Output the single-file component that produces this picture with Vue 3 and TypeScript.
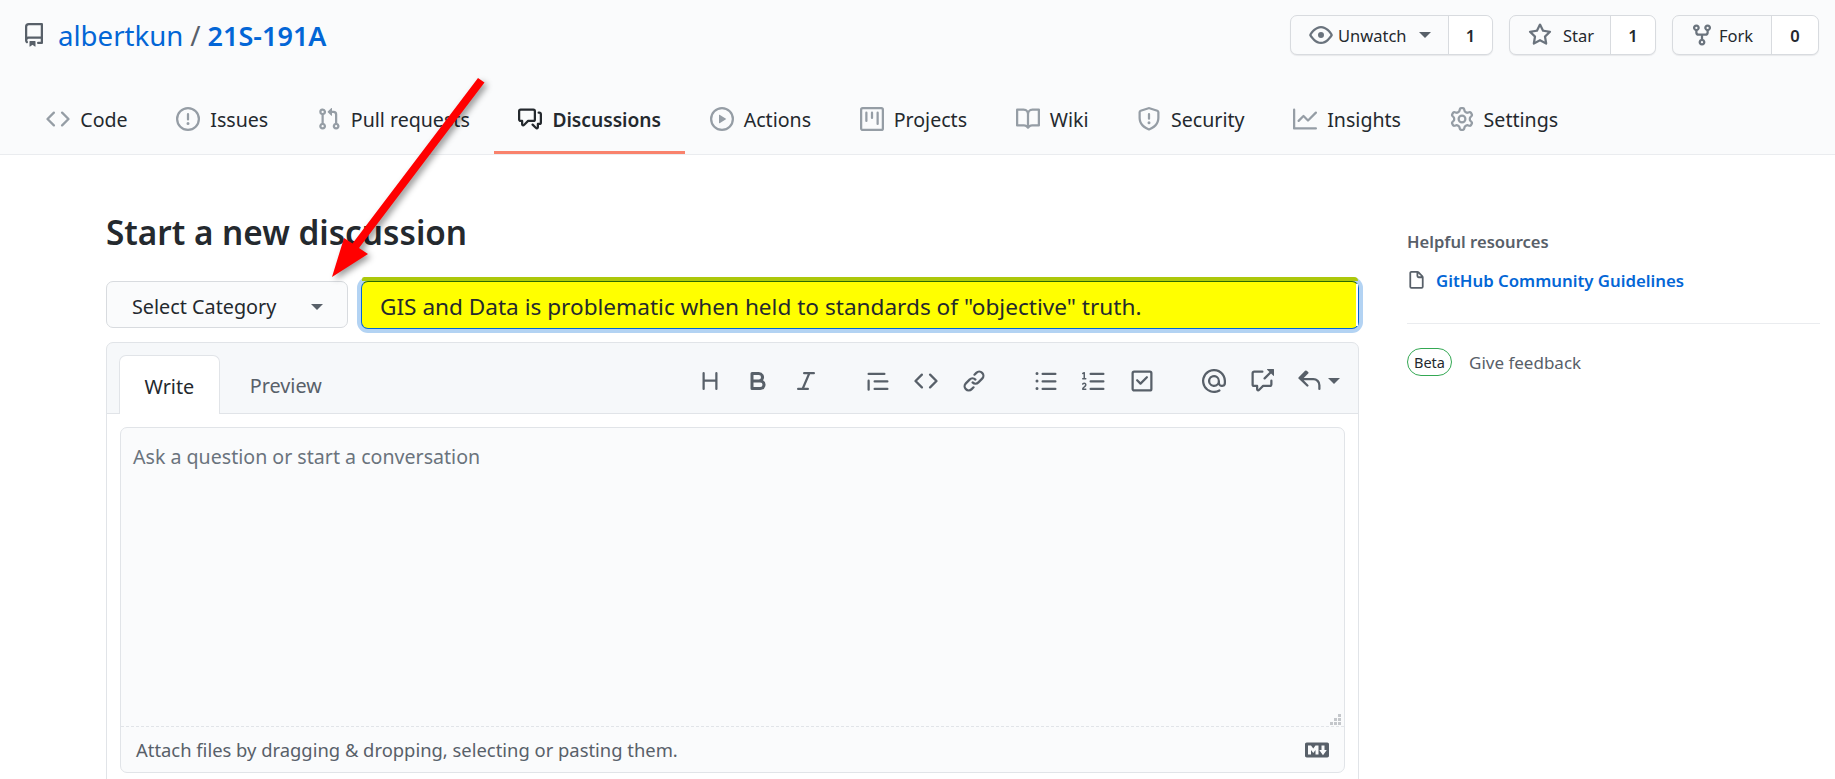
<script setup lang="ts">
const P: Record<string, string> = {
  repo: 'M2 2.5A2.5 2.5 0 014.5 0h8.75a.75.75 0 01.75.75v12.5a.75.75 0 01-.75.75h-2.5a.75.75 0 110-1.5h1.75v-2h-8a1 1 0 00-.714 1.7.75.75 0 01-1.072 1.05A2.495 2.495 0 012 11.5v-9zm10.5-1V9h-8c-.356 0-.694.074-1 .208V2.5a1 1 0 011-1h8zM5 12.25v3.25a.25.25 0 00.4.2l1.45-1.087a.25.25 0 01.3 0L8.6 15.7a.25.25 0 00.4-.2v-3.25a.25.25 0 00-.25-.25h-3.5a.25.25 0 00-.25.25z',
  code: 'M4.72 3.22a.75.75 0 011.06 1.06L2.06 8l3.72 3.72a.75.75 0 11-1.06 1.06L.47 8.53a.75.75 0 010-1.06l4.25-4.25zm6.56 0a.75.75 0 10-1.06 1.06L13.94 8l-3.72 3.72a.75.75 0 101.06 1.06l4.25-4.25a.75.75 0 000-1.06l-4.25-4.25z',
  issue: 'M8 1.5a6.5 6.5 0 100 13 6.5 6.5 0 000-13zM0 8a8 8 0 1116 0A8 8 0 010 8zm9 3a1 1 0 11-2 0 1 1 0 012 0zm-.25-6.25a.75.75 0 00-1.5 0v3.5a.75.75 0 001.5 0v-3.5z',
  pr: 'M7.177 3.073L9.573.677A.25.25 0 0110 .854v4.792a.25.25 0 01-.427.177L7.177 3.427a.25.25 0 010-.354zM3.75 2.5a.75.75 0 100 1.5.75.75 0 000-1.5zm-2.25.75a2.25 2.25 0 113 2.122v5.256a2.251 2.251 0 11-1.5 0V5.372A2.25 2.25 0 011.5 3.25zM11 2.5h-1V4h1a1 1 0 011 1v5.628a2.251 2.251 0 101.5 0V5A2.5 2.5 0 0011 2.5zm1 10.25a.75.75 0 111.5 0 .75.75 0 01-1.5 0zM3.75 12a.75.75 0 100 1.5.75.75 0 000-1.5z',
  discussion: 'M1.5 2.75a.25.25 0 01.25-.25h8.5a.25.25 0 01.25.25v5.5a.25.25 0 01-.25.25h-3.5a.75.75 0 00-.53.22L3.5 11.44V9.25a.75.75 0 00-.75-.75h-1a.25.25 0 01-.25-.25v-5.5zM1.75 1A1.75 1.75 0 000 2.75v5.5C0 9.216.784 10 1.75 10H2v1.543a1.457 1.457 0 002.487 1.03L7.061 10h3.189A1.75 1.75 0 0012 8.25v-5.5A1.75 1.75 0 0010.25 1h-8.5zM14.5 4.75a.25.25 0 00-.25-.25h-.5a.75.75 0 110-1.5h.5c.966 0 1.75.784 1.75 1.75v5.5A1.75 1.75 0 0114.25 12H14v1.543a1.457 1.457 0 01-2.487 1.03L9.22 12.28a.75.75 0 111.06-1.06l2.22 2.22v-2.19a.75.75 0 01.75-.75h1a.25.25 0 00.25-.25v-5.5z',
  play: 'M1.5 8a6.5 6.5 0 1113 0 6.5 6.5 0 01-13 0zM8 0a8 8 0 100 16A8 8 0 008 0zM6.379 5.227A.25.25 0 006 5.442v5.117a.25.25 0 00.379.214l4.264-2.559a.25.25 0 000-.428L6.379 5.227z',
  project: 'M1.75 0A1.75 1.75 0 000 1.75v12.5C0 15.216.784 16 1.75 16h12.5A1.75 1.75 0 0016 14.25V1.75A1.75 1.75 0 0014.25 0H1.75zM1.5 1.75a.25.25 0 01.25-.25h12.5a.25.25 0 01.25.25v12.5a.25.25 0 01-.25.25H1.75a.25.25 0 01-.25-.25V1.75zM11.75 3a.75.75 0 00-.75.75v7.5a.75.75 0 001.5 0v-7.5a.75.75 0 00-.75-.75zm-8.25.75a.75.75 0 011.5 0v5.5a.75.75 0 01-1.5 0v-5.5zM8 3a.75.75 0 00-.75.75v3.5a.75.75 0 001.5 0v-3.5A.75.75 0 008 3z',
  book: 'M0 1.75A.75.75 0 01.75 1h4.253c1.227 0 2.317.59 3 1.501A3.744 3.744 0 0111.006 1h4.245a.75.75 0 01.75.75v10.5a.75.75 0 01-.75.75h-4.507a2.25 2.25 0 00-1.591.659l-.622.621a.75.75 0 01-1.06 0l-.622-.621A2.25 2.25 0 005.258 13H.75a.75.75 0 01-.75-.75V1.75zm8.755 3a2.25 2.25 0 012.25-2.25H14.5v9h-3.757c-.71 0-1.4.201-1.992.572l.004-7.322zm-1.504 7.324l.004-5.073-.002-2.253A2.25 2.25 0 005.003 2.5H1.5v9h3.757a3.75 3.75 0 011.994.574z',
  shield: 'M7.467.133a1.75 1.75 0 011.066 0l5.25 1.68A1.75 1.75 0 0115 3.48V7c0 1.566-.32 3.182-1.303 4.682-.983 1.498-2.585 2.813-5.032 3.855a1.7 1.7 0 01-1.33 0c-2.447-1.042-4.049-2.357-5.032-3.855C1.32 10.182 1 8.566 1 7V3.48a1.75 1.75 0 011.217-1.667l5.25-1.68zm.61 1.429a.25.25 0 00-.153 0l-5.25 1.68a.25.25 0 00-.174.238V7c0 1.358.275 2.666 1.057 3.86.784 1.194 2.121 2.34 4.366 3.297a.2.2 0 00.154 0c2.245-.956 3.582-2.104 4.366-3.298C13.225 9.666 13.5 8.36 13.5 7V3.48a.25.25 0 00-.174-.237l-5.25-1.68zM9 10.5a1 1 0 11-2 0 1 1 0 012 0zm-.25-5.75a.75.75 0 10-1.5 0v3a.75.75 0 001.5 0v-3z',
  graph: 'M1.5 1.75a.75.75 0 00-1.5 0v12.5c0 .414.336.75.75.75h14.5a.75.75 0 000-1.5H1.5V1.75zm14.28 2.53a.75.75 0 00-1.06-1.06L10 7.94 7.53 5.47a.75.75 0 00-1.06 0L3.22 8.72a.75.75 0 001.06 1.06L7 7.06l2.47 2.47a.75.75 0 001.06 0l5.25-5.25z',
  gear: 'M7.429 1.525a6.593 6.593 0 011.142 0c.036.003.108.036.137.146l.289 1.105c.147.56.55.967.997 1.189.174.086.341.183.501.29.417.278.97.423 1.53.27l1.102-.303c.11-.03.175.016.195.046.219.31.41.641.573.989.014.031.022.11-.059.19l-.815.806c-.411.406-.562.957-.53 1.456a4.588 4.588 0 010 .582c-.032.499.119 1.05.53 1.456l.815.806c.08.08.073.159.059.19a6.494 6.494 0 01-.573.99c-.02.029-.086.074-.195.045l-1.103-.303c-.559-.153-1.112-.008-1.529.27-.16.107-.327.204-.5.29-.449.222-.851.628-.998 1.189l-.289 1.105c-.029.11-.101.143-.137.146a6.613 6.613 0 01-1.142 0c-.036-.003-.108-.037-.137-.146l-.289-1.105c-.147-.56-.55-.967-.997-1.189a4.502 4.502 0 01-.501-.29c-.417-.278-.97-.423-1.53-.27l-1.102.303c-.11.03-.175-.016-.195-.046a6.492 6.492 0 01-.573-.989c-.014-.031-.022-.11.059-.19l.815-.806c.411-.406.562-.957.53-1.456a4.587 4.587 0 010-.582c.032-.499-.119-1.05-.53-1.456l-.815-.806c-.08-.08-.073-.159-.059-.19a6.44 6.44 0 01.573-.99c.02-.029.086-.075.195-.045l1.103.303c.559.153 1.112.008 1.529-.27.16-.107.327-.204.5-.29.449-.222.851-.628.998-1.189l.289-1.105c.029-.11.101-.143.137-.146zM8 0c-.236 0-.47.01-.701.03-.743.065-1.29.615-1.458 1.261l-.29 1.106c-.017.066-.078.158-.211.224a5.994 5.994 0 00-.668.386c-.123.082-.233.09-.3.071L3.27 2.776c-.644-.177-1.392.02-1.82.63a7.977 7.977 0 00-.704 1.217c-.315.675-.111 1.422.363 1.891l.815.806c.05.048.098.147.088.294a6.084 6.084 0 000 .772c.01.147-.038.246-.088.294l-.815.806c-.474.469-.678 1.216-.363 1.891.2.428.436.835.704 1.218.428.609 1.176.806 1.82.63l1.103-.303c.066-.019.176-.011.299.071.213.143.436.272.668.386.133.066.194.158.212.224l.289 1.106c.169.646.715 1.196 1.458 1.26a8.094 8.094 0 001.402 0c.743-.064 1.29-.614 1.458-1.26l.29-1.106c.017-.066.078-.158.211-.224a5.98 5.98 0 00.668-.386c.123-.082.233-.09.3-.071l1.102.302c.644.177 1.392-.02 1.82-.63.268-.382.505-.789.704-1.217.315-.675.111-1.422-.364-1.891l-.814-.806c-.05-.048-.098-.147-.088-.294a6.1 6.1 0 000-.772c-.01-.147.039-.246.088-.294l.814-.806c.475-.469.679-1.216.364-1.891a7.992 7.992 0 00-.704-1.218c-.428-.609-1.176-.806-1.82-.63l-1.103.303c-.066.019-.176.011-.299-.071a5.991 5.991 0 00-.668-.386c-.133-.066-.194-.158-.212-.224L10.16 1.29C9.99.645 9.444.095 8.701.031A8.094 8.094 0 008 0zm1.5 8a1.5 1.5 0 11-3 0 1.5 1.5 0 013 0zM11 8a3 3 0 11-6 0 3 3 0 016 0z',
  eye: 'M1.679 7.932c.412-.621 1.242-1.75 2.366-2.717C5.175 4.242 6.527 3.5 8 3.5c1.473 0 2.824.742 3.955 1.715 1.124.967 1.954 2.096 2.366 2.717a.119.119 0 010 .136c-.412.621-1.242 1.75-2.366 2.717C10.825 11.758 9.473 12.5 8 12.5c-1.473 0-2.824-.742-3.955-1.715C2.92 9.818 2.09 8.69 1.679 8.068a.119.119 0 010-.136zM8 2c-1.981 0-3.67.992-4.933 2.078C1.797 5.169.88 6.423.43 7.1a1.619 1.619 0 000 1.798c.45.678 1.367 1.932 2.637 3.024C4.329 13.008 6.019 14 8 14c1.981 0 3.67-.992 4.933-2.078 1.27-1.091 2.187-2.345 2.637-3.023a1.619 1.619 0 000-1.798c-.45-.678-1.367-1.932-2.637-3.023C11.671 2.992 9.981 2 8 2zm0 8a2 2 0 100-4 2 2 0 000 4z',
  star: 'M8 .25a.75.75 0 01.673.418l1.882 3.815 4.21.612a.75.75 0 01.416 1.279l-3.046 2.97.719 4.192a.75.75 0 01-1.088.791L8 12.347l-3.766 1.98a.75.75 0 01-1.088-.79l.72-4.194L.818 6.374a.75.75 0 01.416-1.28l4.21-.611L7.327.668A.75.75 0 018 .25zm0 2.445L6.615 5.5a.75.75 0 01-.564.41l-3.097.45 2.24 2.184a.75.75 0 01.216.664l-.528 3.084 2.769-1.456a.75.75 0 01.698 0l2.77 1.456-.53-3.084a.75.75 0 01.216-.664l2.24-2.183-3.096-.45a.75.75 0 01-.564-.41L8 2.694v.001z',
  fork: 'M5 3.25a.75.75 0 11-1.5 0 .75.75 0 011.5 0zm0 2.122a2.25 2.25 0 10-1.5 0v.878A2.25 2.25 0 005.75 8.5h1.5v2.128a2.251 2.251 0 101.5 0V8.5h1.5a2.25 2.25 0 002.25-2.25v-.878a2.25 2.25 0 10-1.5 0v.878a.75.75 0 01-.75.75h-4.5A.75.75 0 015 6.25v-.878zm3.75 7.378a.75.75 0 11-1.5 0 .75.75 0 011.5 0zm3-8.75a.75.75 0 100-1.5.75.75 0 000 1.5z',
  file: 'M3.75 1.5a.25.25 0 00-.25.25v11.5c0 .138.112.25.25.25h8.5a.25.25 0 00.25-.25V6H9.75A1.75 1.75 0 018 4.25V1.5H3.75zm5.75.56v2.19c0 .138.112.25.25.25h2.19L9.5 2.06zM2 1.75C2 .784 2.784 0 3.75 0h5.086c.464 0 .909.184 1.237.513l3.414 3.414c.329.328.513.773.513 1.237v8.086A1.75 1.75 0 0112.25 15h-8.5A1.75 1.75 0 012 13.25V1.75z',
  heading: 'M3.75 2a.75.75 0 01.75.75V7h7V2.75a.75.75 0 011.5 0v10.5a.75.75 0 01-1.5 0V8.5h-7v4.75a.75.75 0 01-1.5 0V2.75A.75.75 0 013.75 2z',
  bold: 'M4 2a1 1 0 00-1 1v10a1 1 0 001 1h5.5a3.5 3.5 0 001.852-6.47A3.5 3.5 0 008.5 2H4zm4.5 5a1.5 1.5 0 100-3H5v3h3.5zM5 9v3h4.5a1.5 1.5 0 000-3H5z',
  italic: 'M6 2.75A.75.75 0 016.75 2h6.5a.75.75 0 010 1.5h-2.505l-3.858 9H9.25a.75.75 0 010 1.5h-6.5a.75.75 0 010-1.5h2.505l3.858-9H6.75A.75.75 0 016 2.75z',
  quote: 'M1.75 2.5a.75.75 0 000 1.5h10.5a.75.75 0 000-1.5H1.75zm4 5a.75.75 0 000 1.5h8.5a.75.75 0 000-1.5h-8.5zm0 5a.75.75 0 000 1.5h8.5a.75.75 0 000-1.5h-8.5zM2.5 7.75a.75.75 0 00-1.5 0v6a.75.75 0 001.5 0v-6z',
  link: 'M7.775 3.275a.75.75 0 001.06 1.06l1.25-1.25a2 2 0 112.83 2.83l-2.5 2.5a2 2 0 01-2.83 0 .75.75 0 00-1.06 1.06 3.5 3.5 0 004.95 0l2.5-2.5a3.5 3.5 0 00-4.95-4.95l-1.25 1.25zm-4.69 9.64a2 2 0 010-2.83l2.5-2.5a2 2 0 012.83 0 .75.75 0 001.06-1.06 3.5 3.5 0 00-4.95 0l-2.5 2.5a3.5 3.5 0 004.95 4.95l1.25-1.25a.75.75 0 00-1.06-1.06l-1.25 1.25a2 2 0 01-2.83 0z',
  ul: 'M2 4a1 1 0 100-2 1 1 0 000 2zm3.75-1.5a.75.75 0 000 1.5h8.5a.75.75 0 000-1.5h-8.5zm0 5a.75.75 0 000 1.5h8.5a.75.75 0 000-1.5h-8.5zm0 5a.75.75 0 000 1.5h8.5a.75.75 0 000-1.5h-8.5zM3 8a1 1 0 11-2 0 1 1 0 012 0zm-1 6a1 1 0 100-2 1 1 0 000 2z',
  ol: 'M2.003 2.5a.5.5 0 00-.723-.447l-1.003.5a.5.5 0 00.446.895l.28-.14V6H.5a.5.5 0 000 1h2.006a.5.5 0 100-1h-.503V2.5zM5 3.25a.75.75 0 01.75-.75h8.5a.75.75 0 010 1.5h-8.5A.75.75 0 015 3.25zm0 5a.75.75 0 01.75-.75h8.5a.75.75 0 010 1.5h-8.5A.75.75 0 015 8.25zm0 5a.75.75 0 01.75-.75h8.5a.75.75 0 010 1.5h-8.5a.75.75 0 01-.75-.75zM.924 10.32l.003-.004a.851.851 0 01.144-.153A.66.66 0 011.5 10c.195 0 .306.068.374.146a.57.57 0 01.128.376c0 .453-.269.682-.8 1.078l-.035.025C.692 11.98 0 12.495 0 13.5a.5.5 0 00.5.5h2.003a.5.5 0 000-1H1.146c.132-.197.351-.372.654-.597l.047-.035c.47-.35 1.156-.858 1.156-1.845 0-.365-.118-.744-.377-1.038-.268-.303-.658-.484-1.126-.484-.48 0-.84.202-1.068.392a1.858 1.858 0 00-.348.384l-.007.011-.002.004-.001.002-.001.001a.5.5 0 00.851.525z',
  task: 'M2.5 2.75a.25.25 0 01.25-.25h10.5a.25.25 0 01.25.25v10.5a.25.25 0 01-.25.25H2.75a.25.25 0 01-.25-.25V2.75zM2.75 1A1.75 1.75 0 001 2.75v10.5c0 .966.784 1.75 1.75 1.75h10.5A1.75 1.75 0 0015 13.25V2.75A1.75 1.75 0 0013.25 1H2.75zm9.03 3.97a.75.75 0 010 1.06l-4.25 4.25a.75.75 0 01-1.06 0L4.22 8.03a.75.75 0 011.06-1.06L7 8.69l3.72-3.72a.75.75 0 011.06 0z',
  mention: 'M4.75 2.37a6.5 6.5 0 006.5 11.26.75.75 0 01.75 1.298 8 8 0 113.994-7.273.754.754 0 01.006.095v1.5a2.75 2.75 0 01-5.072 1.475A4 4 0 1112 8v1.25a1.25 1.25 0 002.5 0V7.867a6.5 6.5 0 00-9.75-5.496V2.37zM10.5 8a2.5 2.5 0 10-5 0 2.5 2.5 0 005 0z',
  xref: 'M16 .25v4.146a.25.25 0 01-.427.177L14.03 3.03l-3.75 3.75a.75.75 0 11-1.06-1.06l3.75-3.75L11.427.427A.25.25 0 0111.604 0h4.146a.25.25 0 01.25.25zM2.75 2.5a.25.25 0 00-.25.25v7.5c0 .138.112.25.25.25h2a.75.75 0 01.75.75v2.19l2.72-2.72a.75.75 0 01.53-.22h4.5a.25.25 0 00.25-.25v-2.5a.75.75 0 111.5 0v2.5A1.75 1.75 0 0113.25 12H9.06l-2.573 2.573A1.457 1.457 0 014 13.543V12H2.75A1.75 1.75 0 011 10.25v-7.5C1 1.784 1.784 1 2.75 1h5.5a.75.75 0 010 1.5h-5.5z',
  reply: 'M6.78 1.97a.75.75 0 010 1.06L3.81 6h6.44A4.75 4.75 0 0115 10.75v2.5a.75.75 0 01-1.5 0v-2.5a3.25 3.25 0 00-3.25-3.25H3.81l2.97 2.97a.75.75 0 11-1.06 1.06L.47 6.53a.75.75 0 010-1.06l4.25-4.25a.75.75 0 011.06 0z',
  md: 'M14.85 3H1.15C.52 3 0 3.52 0 4.15v7.69C0 12.48.52 13 1.15 13h13.69c.64 0 1.15-.52 1.15-1.15v-7.7C16 3.52 15.48 3 14.85 3zM9 11H7V8L5.5 9.92 4 8v3H2V5h2l1.5 2L7 5h2v6zm2.99.5L9.5 8H11V5h2v3h1.5l-2.51 3.5z'
}

const tabs = [
  { label: 'Code', icon: 'code' },
  { label: 'Issues', icon: 'issue' },
  { label: 'Pull requests', icon: 'pr' },
  { label: 'Discussions', icon: 'discussion', active: true },
  { label: 'Actions', icon: 'play' },
  { label: 'Projects', icon: 'project' },
  { label: 'Wiki', icon: 'book' },
  { label: 'Security', icon: 'shield' },
  { label: 'Insights', icon: 'graph' },
  { label: 'Settings', icon: 'gear' }
]

const toolGroups = [
  ['heading', 'bold', 'italic'],
  ['quote', 'code', 'link'],
  ['ul', 'ol', 'task'],
  ['mention', 'xref']
]
</script>

<template>
  <div class="page">
    <header class="head">
      <div class="head-top">
        <div class="crumb">
          <svg class="ic repo-ic" viewBox="0 0 16 16"><path :d="P.repo" /></svg>
          <a class="owner">albertkun</a>
          <span class="slash">/</span>
          <a class="repo">21S-191A</a>
        </div>
        <div class="actions">
          <div class="btn">
            <span class="btn-main w-watch">
              <svg class="ic btn-ic" viewBox="0 0 16 16"><path :d="P.eye" /></svg>
              <span>Unwatch</span>
              <i class="caret caret-watch"></i>
            </span>
            <span class="count c-watch">1</span>
          </div>
          <div class="btn">
            <span class="btn-main w-star">
              <svg class="ic btn-ic" viewBox="0 0 16 16"><path :d="P.star" /></svg>
              <span class="gap-star">Star</span>
            </span>
            <span class="count c-star">1</span>
          </div>
          <div class="btn">
            <span class="btn-main w-fork">
              <svg class="ic btn-ic" viewBox="0 0 16 16"><path :d="P.fork" /></svg>
              <span>Fork</span>
            </span>
            <span class="count c-fork">0</span>
          </div>
        </div>
      </div>
      <nav class="tabs">
        <a v-for="t in tabs" :key="t.label" class="tab" :class="{ active: t.active }">
          <svg class="ic tab-ic" viewBox="0 0 16 16"><path :d="P[t.icon]" /></svg>
          <span>{{ t.label }}</span>
        </a>
      </nav>
    </header>

    <main class="main">
      <section class="col">
        <h1 class="title">Start a new discussion</h1>
        <div class="form-row">
          <div class="select">
            <span>Select Category</span>
            <i class="caret caret-select"></i>
          </div>
          <div class="input">GIS and Data is problematic when held to standards of "objective" truth.</div>
        </div>
        <div class="panel">
          <div class="panel-head">
            <div class="ptabs">
              <span class="ptab on">Write</span>
              <span class="ptab">Preview</span>
            </div>
            <div class="toolbar">
              <div v-for="(g, i) in toolGroups" :key="i" class="tgroup">
                <svg v-for="n in g" :key="n" class="ic tool" viewBox="0 0 16 16"><path :d="P[n]" /></svg>
              </div>
              <div class="reply">
                <svg class="ic tool" viewBox="0 0 16 16"><path :d="P.reply" /></svg>
                <i class="caret caret-reply"></i>
              </div>
            </div>
          </div>
          <div class="editor">
            <div class="area">
              <div class="write">
                <span class="placeholder">Ask a question or start a conversation</span>
                <svg class="grip" width="11" height="11" viewBox="0 0 11 11">
                  <g fill="#c4c7cb">
                    <rect x="8" y="0" width="3" height="3" />
                    <rect x="4" y="4" width="3" height="3" /><rect x="8" y="4" width="3" height="3" />
                    <rect x="0" y="8" width="3" height="3" /><rect x="4" y="8" width="3" height="3" /><rect x="8" y="8" width="3" height="3" />
                  </g>
                </svg>
              </div>
              <div class="attach">
                <span>Attach files by dragging &amp; dropping, selecting or pasting them.</span>
                <svg class="ic md" viewBox="0 0 16 16"><path :d="P.md" /></svg>
              </div>
            </div>
          </div>
        </div>
      </section>

      <aside class="side">
        <h2 class="side-h">Helpful resources</h2>
        <a class="guide">
          <svg class="ic guide-ic" viewBox="0 0 16 16"><path :d="P.file" /></svg>
          <span>GitHub Community Guidelines</span>
        </a>
        <hr class="rule" />
        <div class="feedback">
          <span class="beta">Beta</span>
          <span class="give">Give feedback</span>
        </div>
      </aside>
    </main>

    <svg class="arrow" width="1835" height="779" viewBox="0 0 1835 779">
      <polygon fill="#ff0000" points="478,78 484.5,82.5 359,248 368,254 332,277 344,238 352.5,243.5" />
    </svg>
  </div>
</template>

<style>
html, body { margin: 0; padding: 0; background: #fff; overflow: hidden; }
</style>

<style scoped>
.page {
  position: relative;
  width: 1835px;
  height: 779px;
  overflow: hidden;
  font-family: "Noto Sans", "Open Sans", sans-serif;
  color: #24292e;
  background: #fff;
}
.arrow { position: absolute; left: 0; top: 0; pointer-events: none; filter: drop-shadow(3px 3px 3px rgba(0, 0, 0, .4)); }
.ic { fill: currentColor; fill-rule: evenodd; display: block; flex: none; }
.head { height: 155px; box-sizing: border-box; background: #fafbfc; border-bottom: 1px solid #eaecef; display: flex; flex-direction: column; }
.head-top { height: 75px; flex: none; display: flex; justify-content: space-between; align-items: flex-start; padding: 15px 16px 0 22px; box-sizing: border-box; }
.crumb { display: flex; align-items: center; height: 40px; font-size: 27.6px; color: #586069; }
.repo-ic { width: 24px; height: 24px; color: #586069; margin-right: 12px; }
.owner { color: #0366d6; }
.slash { margin: 0 7px; color: #586069; }
.repo { color: #0366d6; font-weight: 600; font-size: 27px; }
.actions { display: flex; gap: 16px; }
.btn { display: flex; height: 40px; box-sizing: border-box; border: 1px solid #d8dbdf; border-radius: 7px; font-size: 16.5px; background: #fafbfc; box-shadow: 0 1px 1px rgba(27,31,35,.08); }
.btn-main { display: flex; align-items: center; border-right: 1px solid #d8dbdf; box-sizing: border-box; }
.w-watch { width: 158px; padding-left: 18px; }
.w-star { width: 101px; padding-left: 18px; }
.w-fork { width: 99px; padding-left: 17px; }
.btn-ic { width: 24px; height: 24px; color: #6a737d; margin-right: 5px; }
.gap-star { margin-left: 6px; }
.count { display: flex; align-items: center; justify-content: center; font-weight: 600; background: #fff; border-radius: 0 7px 7px 0; }
.c-watch { width: 43px; }
.c-star { width: 44px; }
.c-fork { width: 46px; }
.caret { display: block; width: 0; height: 0; border-left: 6px solid transparent; border-right: 6px solid transparent; border-top: 6px solid #586069; }
.caret-watch { margin-left: 12px; }
.tabs { display: flex; height: 79px; padding-left: 22px; }
.tab { display: flex; align-items: center; gap: 10px; padding: 12px 24.3px 0; height: 79px; box-sizing: border-box; font-size: 19.6px; color: #24292e; border-bottom: 3px solid transparent; }
.tab-ic { width: 24px; height: 24px; color: #959da5; }
.tab.active { font-weight: 600; font-size: 19.2px; border-bottom-color: #f9826c; }
.tab.active .tab-ic { color: #24292e; }
.main { display: flex; align-items: flex-start; padding: 0 15px 0 106px; gap: 48px; }
.col { width: 1253px; flex: none; }
.title { margin: 0; padding-top: 57px; height: 69px; font-size: 33.3px; line-height: 40px; font-weight: 600; box-sizing: content-box; }
.form-row { display: flex; gap: 13px; height: 61px; align-items: flex-start; }
.select { width: 242px; height: 47px; box-sizing: border-box; display: flex; align-items: center; justify-content: space-between; padding: 4px 24px 0 25px; border: 1px solid #d8dbdf; border-radius: 7px; background: #fafbfc; font-size: 19.8px; }
.input { position: relative; flex: 1; height: 48px; box-sizing: border-box; display: flex; align-items: center; padding: 2px 0 0 18px; background: #ffff00; border: 1.5px solid #0366d6; border-top-color: #2a6a00; border-radius: 7px; box-shadow: 0 0 0 4px #b3d3f3; font-size: 22.6px; }
.input::before { content: ""; position: absolute; left: 0; right: 0; top: -5px; height: 4px; background: #adc80a; border-radius: 3px 5px 0 0; }
.input::after { content: ""; position: absolute; right: 0; top: 2px; bottom: 2px; width: 2px; background: #fff; }
.panel { border: 1px solid #e1e4e8; border-radius: 7px; background: #f6f8fa; height: 600px; box-sizing: border-box; }
.panel-head { display: flex; justify-content: space-between; height: 71px; box-sizing: border-box; border-bottom: 1px solid #e1e4e8; padding: 12px 0 0 12px; }
.ptabs { display: flex; align-items: stretch; height: 59px; gap: 5.5px; }
.ptab { display: flex; align-items: center; padding: 2px 24.5px 0; height: 59px; box-sizing: border-box; color: #586069; font-size: 19.8px; }
.ptab.on { color: #24292e; background: #fff; border: 1px solid #e1e4e8; border-bottom: 0; border-radius: 7px 7px 0 0; }
.toolbar { display: flex; align-items: center; height: 52px; padding-right: 18px; }
.tgroup { display: flex; gap: 24px; margin-right: 48px; }
.tgroup:nth-of-type(4) { margin-right: 24px; }
.tool { width: 24px; height: 24px; color: #586069; }
.reply { display: flex; align-items: center; gap: 6px; }
.caret-reply { border-left-width: 6px; border-right-width: 6px; }
.editor { background: #fff; padding: 13px 13px 12px; height: 527px; box-sizing: border-box; }
.area { display: flex; flex-direction: column; height: 346px; box-sizing: border-box; background: #fafbfc; border: 1px solid #e1e4e8; border-radius: 7px; }
.write { position: relative; flex: 1; }
.placeholder { position: absolute; left: 12px; top: 15px; font-size: 19.6px; color: #6a737d; }
.grip { position: absolute; right: 3px; bottom: 1px; }
.attach { height: 46px; flex: none; box-sizing: border-box; display: flex; align-items: center; justify-content: space-between; padding: 0 15px; border-top: 1px dashed #e1e4e8; font-size: 18.4px; color: #586069; }
.md { width: 24px; height: 24px; color: #586069; }
.side { width: 413px; padding-top: 75px; }
.side-h { margin: 0; font-size: 16.6px; line-height: 24px; font-weight: 600; color: #586069; }
.guide { display: flex; align-items: center; gap: 10px; margin-top: 14px; height: 24px; font-size: 16.8px; font-weight: 600; color: #0366d6; }
.guide-ic { width: 19px; height: 19px; color: #586069; }
.rule { border: 0; border-top: 1px solid #eaecef; margin: 31px 0 24px; }
.feedback { display: flex; align-items: center; gap: 17px; height: 28px; }
.beta { display: flex; align-items: center; justify-content: center; width: 45px; height: 28px; box-sizing: border-box; border: 1px solid #34a853; border-radius: 14px; font-size: 14.5px; }
.give { font-size: 17px; color: #586069; }
</style>
